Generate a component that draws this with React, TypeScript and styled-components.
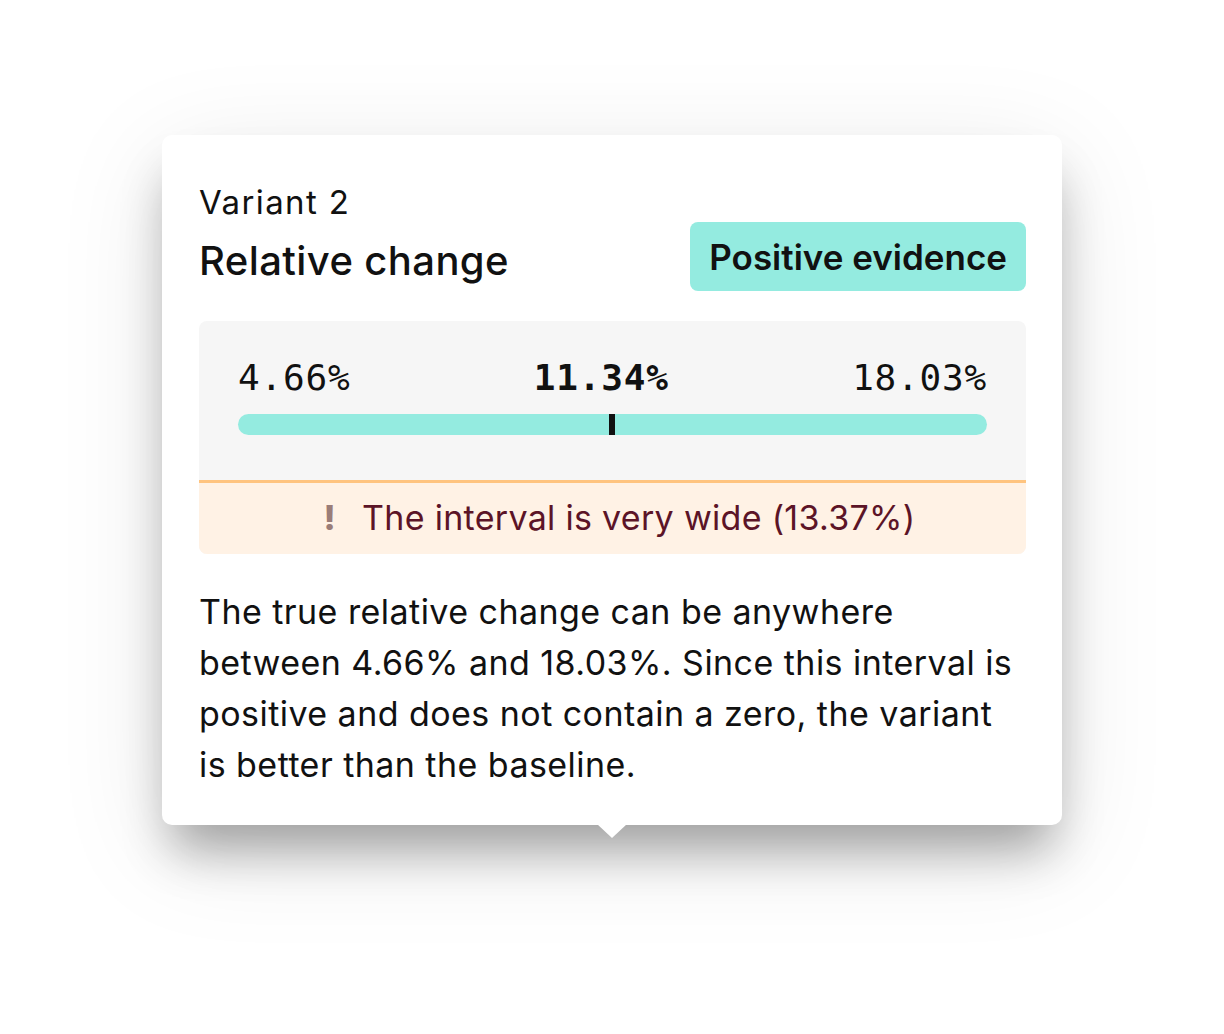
import React from "react";
import styled, { createGlobalStyle } from "styled-components";

const GlobalStyle = createGlobalStyle`
  html, body {
    margin: 0;
    padding: 0;
    background: #ffffff;
  }
  body {
    font-family: Inter, "Open Sans", sans-serif;
    color: #111111;
  }
`;

const Page = styled.div`
  display: flex;
  justify-content: center;
  align-items: flex-start;
  padding-top: 135px;
  min-height: 1034px;
  box-sizing: border-box;
`;

const Card = styled.div`
  position: relative;
  width: 900px;
  box-sizing: border-box;
  padding: 48px 36px 35px 37px;
  background: #ffffff;
  border-radius: 10px;
  box-shadow: 0 34px 46px -10px rgba(0, 0, 0, 0.33),
    0 24px 110px rgba(0, 0, 0, 0.1);

  &::after {
    content: "";
    position: absolute;
    left: 50%;
    bottom: -13px;
    margin-left: -15px;
    border-left: 15px solid transparent;
    border-right: 15px solid transparent;
    border-top: 14px solid #ffffff;
  }
`;

const Eyebrow = styled.div`
  font-size: 33px;
  line-height: 38px;
  font-weight: 400;
  letter-spacing: 1.4px;
`;

const TitleRow = styled.div`
  display: flex;
  align-items: center;
  justify-content: space-between;
  margin-top: 1px;
`;

const Title = styled.h2`
  margin: 0;
  font-size: 40px;
  line-height: 50px;
  font-weight: 500;
  letter-spacing: 0.4px;
  padding-top: 8px;
`;

const Badge = styled.span<{ $tone: "positive" | "negative" }>`
  display: inline-flex;
  align-items: center;
  height: 69px;
  padding: 0 19px;
  box-sizing: border-box;
  border-radius: 8px;
  font-size: 35px;
  font-weight: 600;
  background: ${(p) => (p.$tone === "positive" ? "#94ebe0" : "#ffd2cc")};
  color: #111111;
`;

const IntervalBox = styled.div`
  margin-top: 30px;
  border-radius: 8px;
  overflow: hidden;
  background: #f6f6f6;
`;

const IntervalBody = styled.div`
  padding: 35px 39px 45px 39px;
`;

const Values = styled.div`
  display: flex;
  justify-content: space-between;
  align-items: baseline;
  font-family: "DejaVu Sans Mono", "Liberation Mono", monospace;
  font-size: 36px;
  line-height: 44px;
  letter-spacing: 0.8px;
`;

const Value = styled.span<{ $strong?: boolean }>`
  font-weight: ${(p) => (p.$strong ? 700 : 400)};
`;

const Track = styled.div`
  position: relative;
  margin-top: 14px;
  height: 21px;
  border-radius: 11px;
  background: #94ebe0;
`;

const Marker = styled.div`
  position: absolute;
  top: 0;
  bottom: 0;
  width: 6px;
  margin-left: -3px;
  background: #111111;
`;

const Warning = styled.div`
  display: flex;
  justify-content: center;
  align-items: center;
  gap: 26px;
  height: 74px;
  padding: 0 0 3px 14px;
  box-sizing: border-box;
  border-top: 3px solid #ffc47f;
  background: #fff2e5;
  font-size: 34px;
  letter-spacing: 0.3px;
  color: #5c1427;
`;

const WarningMark = styled.span`
  font-weight: 800;
  color: #9b7d78;
`;

const Explanation = styled.p`
  margin: 32px 0 0;
  font-size: 34px;
  line-height: 51px;
  font-weight: 400;
  color: #111111;
  letter-spacing: 0.45px;
`;

const lower = 4.66;
const upper = 18.03;
const estimate = 11.34;

export default function App() {
  const markerPos = ((estimate - lower) / (upper - lower)) * 100;

  return (
    <>
      <GlobalStyle />
      <Page>
        <Card>
          <Eyebrow>Variant 2</Eyebrow>
          <TitleRow>
            <Title>Relative change</Title>
            <Badge $tone="positive">Positive evidence</Badge>
          </TitleRow>
          <IntervalBox>
            <IntervalBody>
              <Values>
                <Value>{lower.toFixed(2)}%</Value>
                <Value $strong>{estimate.toFixed(2)}%</Value>
                <Value>{upper.toFixed(2)}%</Value>
              </Values>
              <Track>
                <Marker style={{ left: `${markerPos}%` }} />
              </Track>
            </IntervalBody>
            <Warning>
              <WarningMark>!</WarningMark>
              <span>The interval is very wide (13.37%)</span>
            </Warning>
          </IntervalBox>
          <Explanation>
            The true relative change can be anywhere
            <br />
            between 4.66% and 18.03%. Since this interval is
            <br />
            positive and does not contain a zero, the variant
            <br />
            is better than the baseline.
          </Explanation>
        </Card>
      </Page>
    </>
  );
}
